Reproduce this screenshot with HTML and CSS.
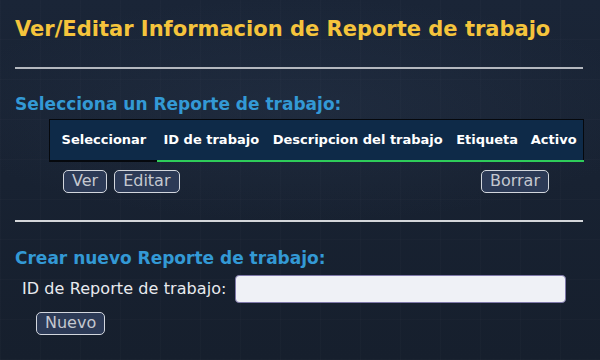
FILE: index.html
```html
<!DOCTYPE html>
<html lang="es">
<head>
    <meta charset="UTF-8">
    <meta name="viewport" content="width=device-width, initial-scale=1.0">
    <title>Ver/Editar Informacion de Reporte de trabajo</title>
    <link rel="stylesheet" href="styles.css">
</head>
<body>
    <div class="page">
        <h1>Ver/Editar Informacion de Reporte de trabajo</h1>
        <hr class="rule-top">

        <!-- Lista de reportes -->
        <h2>Selecciona un Reporte de trabajo:</h2>
        <table class="report-table">
            <thead>
                <tr>
                    <th class="col-select">Seleccionar</th>
                    <th>ID de trabajo</th>
                    <th>Descripcion del trabajo</th>
                    <th>Etiqueta</th>
                    <th>Activo</th>
                </tr>
            </thead>
            <tbody></tbody>
        </table>
        <div class="action-buttons">
            <button>Ver</button>
            <button>Editar</button>
            <button class="btn-delete">Borrar</button>
        </div>

        <hr class="rule-bottom">

        <!-- Nuevo reporte -->
        <h2>Crear nuevo Reporte de trabajo:</h2>
        <form class="new-form">
            <div class="field">
                <label for="reportId">ID de Reporte de trabajo:</label>
                <input type="text" id="reportId" name="reportId">
            </div>
            <button type="button" class="btn-new">Nuevo</button>
        </form>
    </div>
</body>
</html>
```

FILE: styles.css
```css
* {
    box-sizing: border-box;
    margin: 0;
    padding: 0;
}

body {
    font-family: 'DejaVu Sans', Verdana, sans-serif;
    background-color: #172131;
    background-image:
        radial-gradient(ellipse 520px 160px at 300px 110px, rgba(60, 80, 110, 0.18), rgba(0, 0, 0, 0) 70%),
        repeating-linear-gradient(90deg, rgba(255, 255, 255, 0.015) 0 1px, transparent 1px 40px),
        repeating-linear-gradient(0deg, rgba(255, 255, 255, 0.015) 0 1px, transparent 1px 40px),
        linear-gradient(#1a2537, #161f2d);
    height: 360px;
    overflow: hidden;
}

.page {
    padding: 17px 15px 0 15px;
}

h1 {
    color: #f5c43c;
    font-size: 21px;
    font-weight: bold;
    line-height: 24px;
}

hr {
    border: none;
    margin-left: 0;
}

.rule-top {
    height: 2px;
    background-color: #b4b8bf;
    margin-top: 26px;
    width: 568px;
}

.rule-bottom {
    height: 2px;
    background-color: #d4d6da;
    margin-top: 27px;
    width: 568px;
}

h2 {
    color: #3399d5;
    font-size: 17px;
    font-weight: bold;
    line-height: 20px;
}

.rule-top + h2 {
    margin-top: 25px;
}

.rule-bottom + h2 {
    margin-top: 26px;
}

.report-table {
    margin-top: 5px;
    margin-left: 34px;
    width: 535px;
    border-collapse: collapse;
    background-color: #0e2a48;
    border: 1px solid #05080d;
    border-bottom: none;
}

.report-table th {
    color: #ffffff;
    font-size: 13px;
    font-weight: bold;
    height: 41px;
    padding: 0 6px;
    text-align: center;
    white-space: nowrap;
    border-bottom: 2px solid #2ecc5a;
}

.report-table th.col-select {
    padding: 0 10px 0 11px;
    border-bottom: 2px solid #05080d;
}

.action-buttons {
    display: flex;
    gap: 7px;
    margin-top: 8px;
    margin-left: 48px;
    width: 486px;
}

button {
    font-family: 'DejaVu Sans', Verdana, sans-serif;
    font-size: 16px;
    height: 23px;
    padding: 0 8px;
    line-height: 20px;
    color: #c4c8d0;
    background-color: #2c3a56;
    border: 1px solid #d2d6dd;
    border-radius: 5px;
    cursor: pointer;
}

.btn-delete {
    margin-left: auto;
}

.new-form {
    margin-top: 7px;
}

.field {
    display: flex;
    align-items: center;
    gap: 8px;
    padding-left: 7px;
}

.field label {
    color: #e8eaee;
    font-size: 16px;
    letter-spacing: 0.08px;
}

.field input {
    width: 331px;
    height: 28px;
    background-color: #eff1f6;
    border: 1px solid #7e78a8;
    border-radius: 4px;
}

.btn-new {
    margin-top: 9px;
    margin-left: 21px;
}
```
